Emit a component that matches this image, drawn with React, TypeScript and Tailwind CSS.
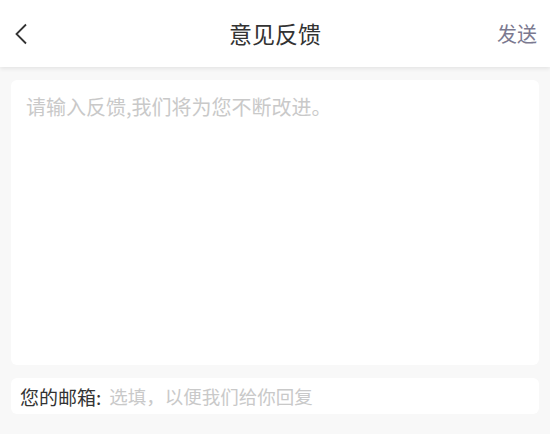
export default function App() {
    return (
        <div
            className="w-[550px] h-[434px] bg-[#f8f8f8] flex flex-col overflow-hidden"
            style={{ fontFamily: '"Noto Sans CJK SC", "Noto Sans", sans-serif' }}
        >
            {/* Header */}
            <div className="relative z-10 h-[67px] bg-white flex items-center justify-between px-[13px] shadow-[0_2px_4px_rgba(0,0,0,0.08)]">
                <button className="w-[20px] h-[24px] flex items-center justify-start">
                    <svg width="16" height="24" viewBox="0 0 16 24" fill="none">
                        <path d="M13 2.5 L3.5 12 L13 21.5" stroke="#333" strokeWidth="1.8" />
                    </svg>
                </button>
                <h1 className="absolute left-1/2 -translate-x-1/2 text-[23px] leading-none text-[#333]">意见反馈</h1>
                <button className="text-[20px] leading-none text-[#7b7990]">发送</button>
            </div>

            {/* Feedback */}
            <div className="mx-[11px] mt-[13px] h-[285px] bg-white rounded-[6px] px-[15px] pt-[17px]">
                <p className="text-[20px] leading-none text-[#c9c9c9]">请输入反馈,我们将为您不断改进。</p>
            </div>

            {/* Email */}
            <div className="mx-[11px] mt-[13px] h-[36px] bg-white rounded-[6px] px-[9px] flex items-center gap-[8px]">
                <span className="text-[19px] leading-none text-[#333]">您的邮箱:</span>
                <span className="text-[18.5px] leading-none text-[#c9c9c9]">选填，以便我们给你回复</span>
            </div>
        </div>
    );
}
